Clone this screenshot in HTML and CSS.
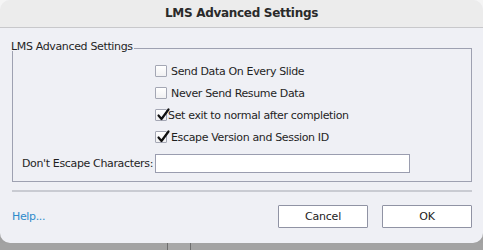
FILE: index.html
```html
<!DOCTYPE html>
<html lang="en">
<head>
  <meta charset="UTF-8">
  <title>LMS Advanced Settings</title>
  <link rel="stylesheet" href="styles.css">
</head>
<body>
  <div class="dialog">
    <div class="titlebar">LMS Advanced Settings</div>

    <div class="content">
      <!-- Group box -->
      <div class="group-title"><span>LMS Advanced Settings</span></div>
      <div class="group-body">
        <div class="options">
          <label class="option">
            <span class="check"></span>
            <span>Send Data On Every Slide</span>
          </label>
          <label class="option">
            <span class="check"></span>
            <span>Never Send Resume Data</span>
          </label>
          <label class="option tight">
            <span class="check checked">
              <svg viewBox="0 0 14 14" width="14" height="14"><path d="M2.5 7.5 L5.5 11 L12.5 1.5" /></svg>
            </span>
            <span>Set exit to normal after completion</span>
          </label>
          <label class="option">
            <span class="check checked">
              <svg viewBox="0 0 14 14" width="14" height="14"><path d="M2.5 7.5 L5.5 11 L12.5 1.5" /></svg>
            </span>
            <span>Escape Version and Session ID</span>
          </label>
        </div>
        <div class="field-row">
          <label for="escapeChars">Don't Escape Characters:</label>
          <input type="text" id="escapeChars">
        </div>
      </div>

      <div class="separator"></div>

      <div class="footer">
        <a class="help" href="#">Help...</a>
        <div class="buttons">
          <button>Cancel</button>
          <button>OK</button>
        </div>
      </div>
    </div>
  </div>
  <div class="desk"></div>
</body>
</html>
```

FILE: styles.css
```css
/* Global */
* {
  margin: 0;
  padding: 0;
  box-sizing: border-box;
}

body {
  width: 483px;
  height: 250px;
  overflow: hidden;
  font-family: 'DejaVu Sans', sans-serif;
  font-size: 11px;
  letter-spacing: -0.35px;
  color: #1f1f1f;
  background: linear-gradient(#f5f5f5 0, #f5f5f5 200px, #a1a1a1 200px);
}

/* Dialog window */
.dialog {
  height: 243px;
  background-color: #eff0f5;
  border-radius: 10px;
  overflow: hidden;
}

.titlebar {
  height: 28px;
  line-height: 27px;
  text-align: center;
  font-size: 12px;
  font-weight: bold;
  letter-spacing: -0.3px;
  color: #2a2a2a;
  background-color: #ececec;
  border-bottom: 1px solid #c8c8cb;
}

.content {
  padding: 13px 11px 0 12px;
}

/* Group box */
.group-title {
  display: flex;
  align-items: flex-end;
  height: 10px;
}

.group-title span {
  margin-left: -1px;
  margin-bottom: -2px;
  line-height: 12px;
}

.group-title::after {
  content: '';
  flex: 1;
  height: 2px;
  margin-left: 1px;
  border-top: 1px solid #9ea1b1;
  border-right: 1px solid #9ea1b1;
}

.group-body {
  border: 1px solid #9ea1b1;
  border-top: none;
  padding: 9px 0 7px 0;
}

.options {
  padding-left: 142px;
}

.option {
  display: flex;
  align-items: center;
  height: 22px;
}

.check {
  position: relative;
  width: 12px;
  height: 12px;
  margin-right: 4px;
  border: 1px solid #a4a7b4;
  border-radius: 1px;
  background: linear-gradient(#ffffff, #f0f0f2);
}

.option.tight .check {
  margin-right: 1px;
}

.check svg {
  position: absolute;
  left: 0;
  top: -2px;
  overflow: visible;
}

.check svg path {
  fill: none;
  stroke: #111;
  stroke-width: 2.2;
  stroke-linecap: round;
  stroke-linejoin: round;
}

.field-row {
  display: grid;
  grid-template-columns: 142px 255px;
  align-items: center;
  height: 22px;
  margin-top: 4px;
}

.field-row label {
  text-align: right;
  padding-right: 2px;
  white-space: nowrap;
}

.field-row input {
  height: 19px;
  border: 1px solid #9a9daf;
  background-color: #ffffff;
  outline: none;
}

/* Footer */
.separator {
  height: 2px;
  margin-top: 8px;
  background-color: #c9cbd2;
}

.footer {
  display: flex;
  justify-content: space-between;
  align-items: center;
  margin-top: 13px;
}

.help {
  color: #2d8bcb;
  text-decoration: none;
}

.buttons {
  display: flex;
  gap: 14px;
}

.buttons button {
  width: 90px;
  height: 23px;
  font-family: 'DejaVu Sans', sans-serif;
  font-size: 11px;
  letter-spacing: -0.2px;
  color: #222;
  background-color: #ffffff;
  border: 1px solid #9093a4;
  border-radius: 1px;
}

/* Area under the dialog */
.desk {
  height: 7px;
  background: linear-gradient(to right, #a3a3a3 167px, #6e6e6e 167px, #6e6e6e 168px, #a8a8a8 168px, #a8a8a8 190px, #6e6e6e 190px, #6e6e6e 191px, #a3a3a3 191px);
}
```
